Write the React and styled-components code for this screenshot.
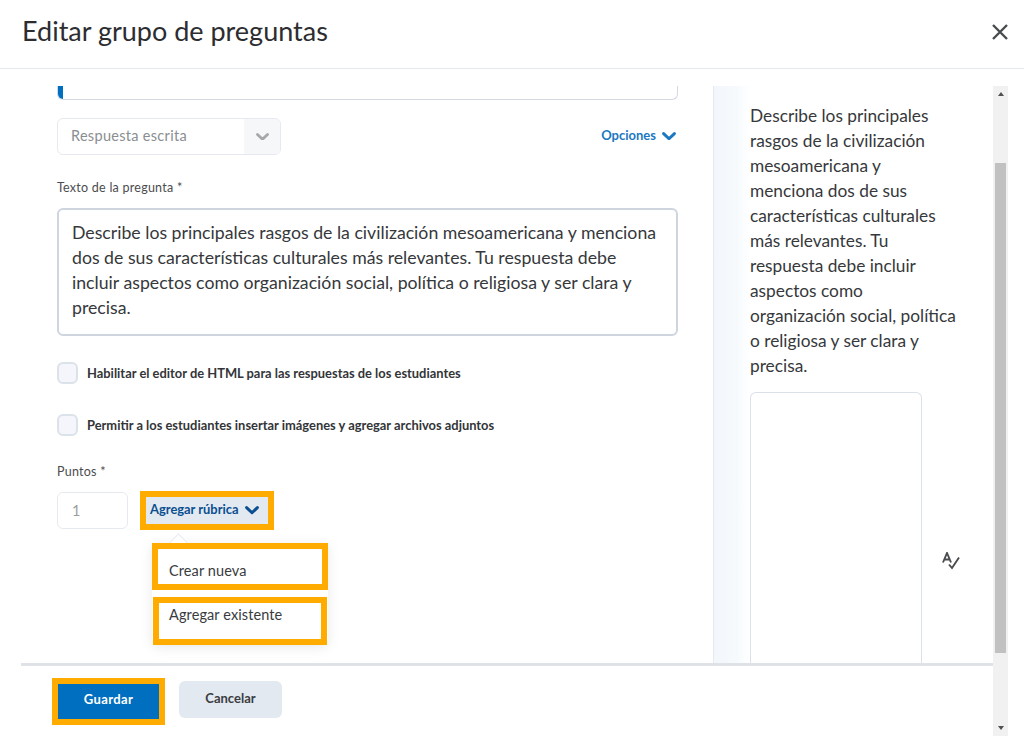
import React from "react";
import styled, { createGlobalStyle } from "styled-components";

const Global = createGlobalStyle`
  html, body { margin: 0; padding: 0; background: #fff; }
  body { font-family: Lato, "Open Sans", sans-serif; color: #202122; }
  * { box-sizing: border-box; }
`;
const Dialog = styled.div`width: 1024px; height: 751px; overflow: hidden; display: flex; flex-direction: column;`;
const Header = styled.header`
  height: 69px; flex: none; border-bottom: 1px solid #e6eaf0; display: flex; align-items: center;
  justify-content: space-between; padding: 0 14px 8px 22px;
`;
const Title = styled.h1`margin: 0; font-size: 27px; font-weight: 400; color: #2c2d30;`;
const Close = styled.svg`width: 18px; height: 18px; stroke: #494c4e; stroke-width: 2.4; fill: none; margin: 4px 1px 0 0;`;
const Main = styled.div`flex: 1; display: flex; padding: 0 16px 0 21px; min-height: 0;`;
const Pane = styled.div`width: 972px; flex: none; display: flex; flex-direction: column;`;
const Body = styled.div`height: 597px; flex: none; display: flex; border-bottom: 3px solid #dfe3e8;`;
const Left = styled.div`width: 692px; flex: none; padding: 17px 35px 0 36px; display: flex; flex-direction: column;`;
const Stub = styled.div`
  height: 14px; border: 1px solid #d3d9e3; border-top: 0; border-radius: 0 0 6px 6px; position: relative; overflow: hidden;
`;
const StubBar = styled.span`position: absolute; left: 0; top: 0; bottom: 0; width: 5px; background: #006fbf; border-radius: 0 0 0 4px;`;
const SelectRow = styled.div`display: flex; justify-content: space-between; align-items: center; margin-top: 18px;`;
const Select = styled.div`
  width: 224px; height: 37px; border: 1px solid #e6eaf0; border-radius: 6px; display: flex; overflow: hidden;
`;
const SelectText = styled.span`flex: 1; padding-left: 13px; font-size: 14.5px; line-height: 33px; color: #8a8e91; letter-spacing: 0.3px;`;
const SelectArrow = styled.span`width: 36px; background: #f6f7f8; display: flex; align-items: center; justify-content: center;`;
const Chevron = styled.svg`
  width: ${p => p.$size || 14}px; height: ${p => (p.$size || 14) * 0.6}px; margin-top: ${p => p.$drop || 0}px; fill: none; stroke: ${p => p.$color};
  stroke-width: ${p => p.$weight || 3}; stroke-linecap: round; stroke-linejoin: round; flex: none;
`;
const Options = styled.a`display: flex; align-items: center; gap: 6px; font-size: 13px; font-weight: 700; color: #1c78c0; padding: 0 2px 3px 0;`;
const Label = styled.div`font-size: 12.5px; line-height: 16px; color: #4b4c4e; letter-spacing: 0.25px;`;
const QuestionLabel = styled(Label)`margin-top: 25px;`;
const Question = styled.div`
  margin-top: 12px; height: 128px; border: 2px solid #ced5df; border-radius: 6px; padding: 10px 13px;
  font-size: 17.7px; line-height: 25px; color: #36383b;
`;
const CheckRow = styled.label`display: flex; align-items: center; gap: 9px; height: 22px; margin-top: ${p => p.$top}px;`;
const Box = styled.span`width: 21px; height: 22px; flex: none; border: 2px solid #dce2ea; border-radius: 6px; background: #f4f6fb;`;
const CheckText = styled.span`font-size: 12.9px; font-weight: 700; color: #333538;`;
const PointsLabel = styled(Label)`margin-top: 28px;`;
const PointsRow = styled.div`display: flex; align-items: flex-start; gap: 12px; margin-top: 11px;`;
const Points = styled.div`
  width: 71px; height: 37px; margin-top: 1px; border: 1px solid #e6eaf0; border-radius: 6px; padding-left: 14px;
  font-size: 14.5px; line-height: 35px; color: #9a9da0;
`;
const RubricWrap = styled.div`position: relative;`;
const Rubric = styled.div`
  width: 134px; height: 39px; border: 6.5px solid #ffab00; background: #e3e9f1; display: flex; align-items: center;
  gap: 6px; padding: 0 0 3px 4px; font-size: 12.9px; font-weight: 700; color: #0a4f8f; white-space: nowrap;
`;
const Menu = styled.div`
  position: absolute; left: 12px; top: 52px; width: 176px; height: 102px; background: #fff; border-radius: 6px;
  box-shadow: 0 2px 12px rgba(86, 90, 92, 0.14);
`;
const Pointer = styled.span`
  position: absolute; left: 20px; top: -7px; width: 13px; height: 13px; background: #fff; transform: rotate(45deg);
  border: 1px solid #e6eaf0; border-right: 0; border-bottom: 0;
`;
const Item = styled.div`
  position: relative; height: ${p => p.$h}px; margin: ${p => p.$m}; border: 6.5px solid #ffab00; background: #fff;
  font-size: 14.5px; color: #393b3e; letter-spacing: 0.1px; padding: ${p => p.$pad};
`;
const Preview = styled.aside`
  width: 280px; flex: none; margin-top: 17px; padding-left: 36px; display: flex; flex-direction: column;
  background: linear-gradient(90deg, #f3f7fc 0, #f6fafd 22px, #fff 36px) no-repeat left top / 36px 100%;
  border-left: 1px solid #e6eaf0;
`;
const PreviewText = styled.p`margin: 17px 0 0; width: 207px; font-size: 17.3px; line-height: 25px; color: #36383b;`;
const BoxRow = styled.div`flex: 1; display: flex; margin-top: 14px; min-height: 0;`;
const AnswerBox = styled.div`width: 172px; border: 1px solid #dbe1e9; border-bottom: 0; border-radius: 6px 6px 0 0;`;
const Spell = styled.svg`width: 18px; height: 18px; margin: 160px 0 0 20px; fill: none; stroke: #4a4c4f; stroke-width: 1.9;`;
const Footer = styled.footer`display: flex; padding: 12px 0 0 31px; align-items: flex-start; gap: 14px;`;
const Save = styled.div`
  width: 113px; height: 47px; border: 6.5px solid #ffab00; background: #006fbf; color: #fff; display: flex; align-items: center;
  justify-content: center; padding-bottom: 5px; font-size: 13px; font-weight: 700; letter-spacing: 0.4px;
`;
const Cancel = styled.div`
  width: 103px; height: 37px; margin-top: 3px; border-radius: 6px; background: #e3e9f1; color: #3a3c40; display: flex;
  align-items: center; justify-content: center; padding-bottom: 3px; font-size: 13px; font-weight: 700;
`;
const Scroll = styled.div`
  width: 15px; height: 650px; flex: none; margin-top: 17px; background: #f1f1f1; display: flex; flex-direction: column;
  align-items: center; justify-content: space-between; padding: 6px 0;
`;
const Thumb = styled.div`width: 11px; height: 490px; background: #c1c1c1; margin-top: 3px;`;
const Arrow = styled.span`
  width: 0; height: 0; border-left: 3.5px solid transparent; border-right: 3.5px solid transparent;
  ${p => p.$down ? "border-top: 4px solid #505050;" : "border-bottom: 4px solid #505050;"}
`;
const ThumbSlot = styled.div`flex: 1; width: 100%; display: flex; justify-content: center; padding-top: 64px;`;

const ChevronIcon = ({ color, size, weight, drop }) => (
  <Chevron $color={color} $size={size} $weight={weight} $drop={drop} viewBox="0 0 14 8.4"><path d="M1.6 1.6 7 6.8l5.4-5.2" /></Chevron>
);
const q = "Describe los principales rasgos de la civilización mesoamericana y menciona dos de sus características culturales más relevantes. Tu respuesta debe incluir aspectos como organización social, política o religiosa y ser clara y precisa.";

export default function App() {
  return (
    <Dialog>
      <Global />
      <Header>
        <Title>Editar grupo de preguntas</Title>
        <Close viewBox="0 0 18 18"><path d="M2 2l14 14M16 2 2 16" /></Close>
      </Header>
      <Main>
        <Pane>
          <Body>
            <Left>
              <Stub><StubBar /></Stub>
              <SelectRow>
                <Select>
                  <SelectText>Respuesta escrita</SelectText>
                  <SelectArrow><ChevronIcon color="#a6a9ac" size={13} /></SelectArrow>
                </Select>
                <Options>Opciones <ChevronIcon color="#1c78c0" drop={2} /></Options>
              </SelectRow>
              <QuestionLabel>Texto de la pregunta *</QuestionLabel>
              <Question>{q}</Question>
              <CheckRow $top={26}><Box /><CheckText>Habilitar el editor de HTML para las respuestas de los estudiantes</CheckText></CheckRow>
              <CheckRow $top={30}><Box /><CheckText>Permitir a los estudiantes insertar imágenes y agregar archivos adjuntos</CheckText></CheckRow>
              <PointsLabel>Puntos *</PointsLabel>
              <PointsRow>
                <Points>1</Points>
                <RubricWrap>
                  <Rubric>Agregar rúbrica <ChevronIcon color="#0a4f8f" drop={3} /></Rubric>
                  <Menu>
                    <Pointer />
                    <Item $h={47} $m="0" $pad="13px 0 0 11px">Crear nueva</Item>
                    <Item $h={48} $m="7px 1px 0" $pad="3px 0 0 10px">Agregar existente</Item>
                  </Menu>
                </RubricWrap>
              </PointsRow>
            </Left>
            <Preview>
              <PreviewText>{q}</PreviewText>
              <BoxRow>
                <AnswerBox />
                <Spell viewBox="0 0 18 18">
                  <path d="M1 10.5 5 1 9 10.5M2.5 7.5h5" />
                  <path d="M7 12.5l3 3.5 7-10.5" />
                </Spell>
              </BoxRow>
            </Preview>
          </Body>
          <Footer>
            <Save>Guardar</Save>
            <Cancel>Cancelar</Cancel>
          </Footer>
        </Pane>
        <Scroll>
          <Arrow />
          <ThumbSlot><Thumb /></ThumbSlot>
          <Arrow $down />
        </Scroll>
      </Main>
    </Dialog>
  );
}
